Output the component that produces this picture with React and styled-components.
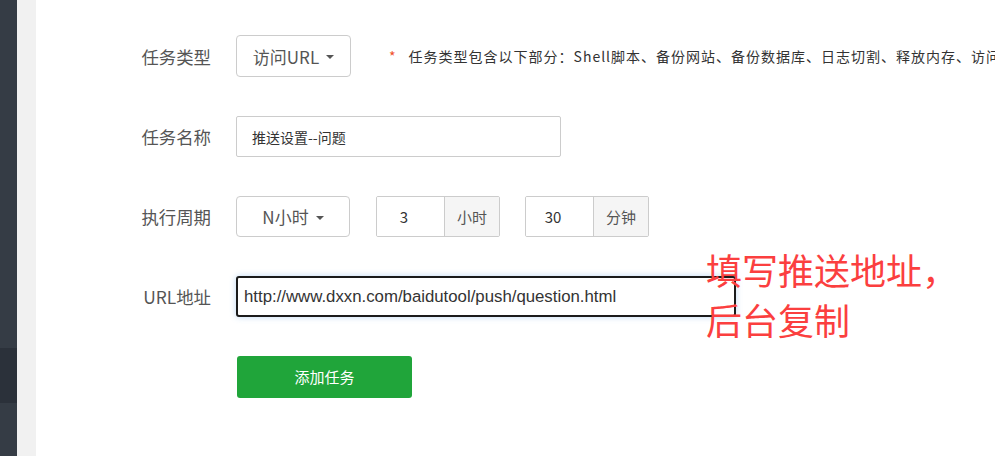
import React from "react"
import styled, { createGlobalStyle } from "styled-components"

const GlobalStyle = createGlobalStyle`
  html, body {
    margin: 0;
    padding: 0;
    background: #fff;
  }
  body {
    font-family: "Noto Sans CJK SC", "Noto Sans", sans-serif;
    color: #555;
  }
`

const Page = styled.div`
  display: flex;
  height: 456px;
  overflow: hidden;
`

const Sidebar = styled.div`
  width: 17px;
  flex: none;
  background: #353c45;
  display: flex;
  flex-direction: column;
  .active {
    margin-top: 348px;
    height: 55px;
    background: #2b313a;
  }
`

const Gutter = styled.div`
  width: 19px;
  flex: none;
  background: #f1f1f1;
`

const Content = styled.div`
  position: relative;
  flex: 1;
  padding: 35px 0 0 100px;
  background: #fff;
`

const FormRow = styled.div`
  display: flex;
  align-items: center;
  height: ${p => p.height || 41}px;
  margin-bottom: 39px;
  white-space: nowrap;
`

const Label = styled.label`
  width: 75px;
  margin-right: 25px;
  text-align: right;
  font-size: 17.4px;
  color: #555;
`

const Dropdown = styled.button`
  box-sizing: border-box;
  width: ${p => p.width || 115}px;
  height: ${p => p.height || 41}px;
  display: flex;
  align-items: center;
  justify-content: center;
  background: #fff;
  border: 1px solid #ccc;
  border-radius: 4px;
  font-family: inherit;
  font-size: 17px;
  color: #555;
  padding: 0;
  cursor: pointer;
`

const Caret = styled.span`
  display: inline-block;
  margin-left: 7px;
  margin-top: 2px;
  border-top: 4px solid #555;
  border-left: 4px solid transparent;
  border-right: 4px solid transparent;
`

const Hint = styled.div`
  margin-left: 38px;
  font-size: 14px;
  letter-spacing: 1px;
  color: #333;
  .star {
    color: #f0502a;
    margin-right: 12px;
  }
`

const TextInput = styled.input`
  box-sizing: border-box;
  width: ${p => p.width}px;
  height: 41px;
  padding: 0 15px;
  border: 1px solid #ccc;
  border-radius: 2px;
  font-family: inherit;
  font-size: 14px;
  color: #333;
  outline: none;
`

const UrlInput = styled.input`
  box-sizing: border-box;
  width: 500px;
  height: 41px;
  padding: 0 6px;
  border: 2px solid #1b1b1b;
  border-radius: 3px;
  box-shadow: 0 0 6px rgba(110, 170, 230, 0.45);
  font-family: "Liberation Sans", "Noto Sans CJK SC", sans-serif;
  font-size: 16.8px;
  color: #333;
  caret-color: #222;
  outline: none;
`

const InputGroup = styled.div`
  display: flex;
  height: 41px;
  margin-left: ${p => p.gap}px;
  border: 1px solid #ccc;
  border-radius: 2px;
  box-sizing: border-box;
  overflow: hidden;
`

const GroupField = styled.input`
  box-sizing: border-box;
  width: 67px;
  height: 100%;
  border: none;
  padding: 0 25px 0 12px;
  text-align: center;
  font-family: inherit;
  font-size: 15px;
  color: #333;
  outline: none;
`

const Addon = styled.span`
  box-sizing: border-box;
  width: 55px;
  display: flex;
  align-items: center;
  justify-content: center;
  background: #f5f5f5;
  border-left: 1px solid #ccc;
  font-size: 15px;
  color: #555;
`

const SubmitButton = styled.button`
  margin-left: 101px;
  width: 175px;
  height: 42px;
  border: none;
  border-radius: 3px;
  background: #20a53a;
  color: #fff;
  font-family: inherit;
  font-size: 15px;
  cursor: pointer;
`

const Note = styled.div`
  position: absolute;
  left: 670px;
  top: 244px;
  font-size: 36px;
  line-height: 50px;
  color: #fb3f3f;
  white-space: nowrap;
`

export default function App() {
  return (
    <>
      <GlobalStyle />
      <Page>
        <Sidebar>
          <div className="active" />
        </Sidebar>
        <Gutter />
        <Content>
          <FormRow height={42}>
            <Label>任务类型</Label>
            <Dropdown height={42}>
              访问URL<Caret />
            </Dropdown>
            <Hint>
              <span className="star">*</span>
              任务类型包含以下部分：Shell脚本、备份网站、备份数据库、日志切割、释放内存、访问URL
            </Hint>
          </FormRow>

          <FormRow>
            <Label>任务名称</Label>
            <TextInput width={325} defaultValue="推送设置--问题" />
          </FormRow>

          <FormRow>
            <Label>执行周期</Label>
            <Dropdown width={114}>
              N小时<Caret />
            </Dropdown>
            <InputGroup gap={26}>
              <GroupField defaultValue="3" />
              <Addon>小时</Addon>
            </InputGroup>
            <InputGroup gap={25}>
              <GroupField defaultValue="30" />
              <Addon>分钟</Addon>
            </InputGroup>
          </FormRow>

          <FormRow>
            <Label>URL地址</Label>
            <UrlInput
              autoFocus
              defaultValue="http://www.dxxn.com/baidutool/push/question.html"
            />
          </FormRow>

          <FormRow>
            <SubmitButton>添加任务</SubmitButton>
          </FormRow>

          <Note>
            填写推送地址，
            <br />
            后台复制
          </Note>
        </Content>
      </Page>
    </>
  )
}
